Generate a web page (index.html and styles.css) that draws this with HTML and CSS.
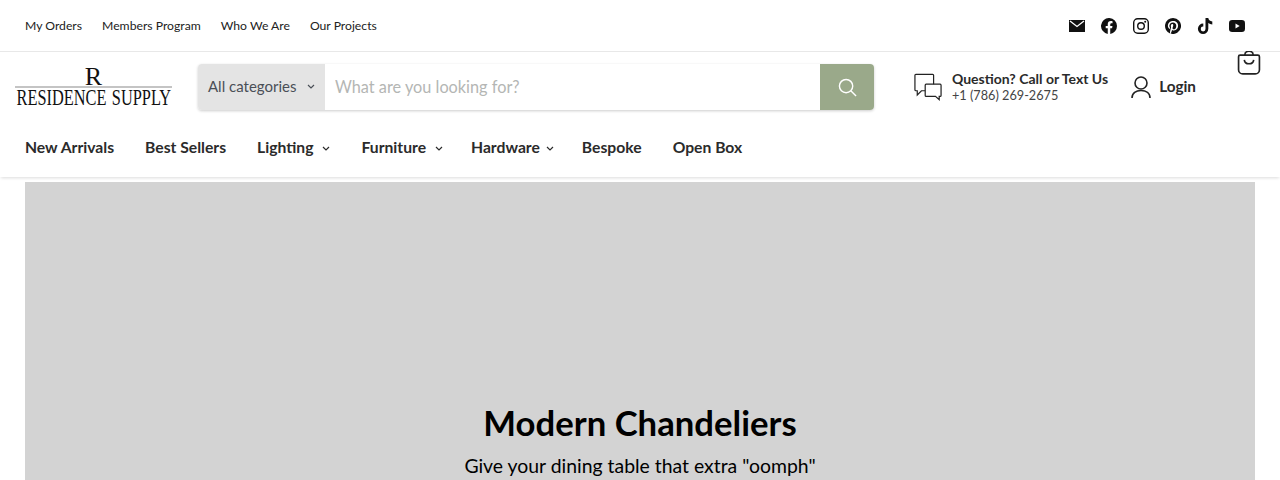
FILE: index.html
```html
<!DOCTYPE html>
<html lang="en">
<head>
    <meta charset="UTF-8">
    <meta name="viewport" content="width=device-width, initial-scale=1.0">
    <title>Residence Supply</title>
    <link rel="stylesheet" href="styles.css">
</head>
<body>
    <!-- Top bar -->
    <div class="topbar">
        <div class="toplinks">
            <a href="#">My Orders</a>
            <a href="#">Members Program</a>
            <a href="#">Who We Are</a>
            <a href="#">Our Projects</a>
        </div>
        <div class="social">
            <svg viewBox="0 0 16 16"><path d="M0 2h16v12H0z"/><path d="M1 3l7 5.500L15 3" fill="none" stroke="#fff" stroke-width="1.300"/></svg>
            <svg viewBox="0 0 16 16"><path d="M16 8a8 8 0 1 0-9.250 7.900V10.300H4.700V8h2.050V6.200c0-2 1.200-3.100 3-3.100.9 0 1.800.15 1.800.15v2h-1c-1 0-1.300.6-1.300 1.250V8h2.200l-.35 2.300H9.250v5.600A8 8 0 0 0 16 8z"/></svg>
            <svg viewBox="0 0 16 16"><rect x=".7" y=".7" width="14.600" height="14.600" rx="4" fill="none" stroke="#111" stroke-width="1.400"/><circle cx="8" cy="8" r="3.300" fill="none" stroke="#111" stroke-width="1.400"/><circle cx="12.200" cy="3.800" r="1"/></svg>
            <svg viewBox="0 0 16 16"><path fill-rule="evenodd" d="M8 0a8 8 0 0 0-2.900 15.450c-.07-.63-.13-1.600.03-2.300l.94-3.970s-.24-.48-.24-1.180c0-1.100.64-1.930 1.440-1.930.68 0 1 .51 1 1.120 0 .68-.43 1.700-.66 2.650-.19.790.4 1.440 1.180 1.440 1.420 0 2.500-1.500 2.500-3.650 0-1.900-1.370-3.240-3.330-3.240-2.270 0-3.600 1.700-3.600 3.460 0 .68.26 1.420.59 1.820.06.080.07.150.05.230l-.22.900c-.04.140-.12.170-.27.100-1-.46-1.620-1.920-1.620-3.090 0-2.520 1.830-4.830 5.270-4.830 2.770 0 4.920 1.970 4.920 4.610 0 2.750-1.730 4.960-4.140 4.960-.81 0-1.570-.42-1.830-.92l-.5 1.900c-.18.690-.67 1.560-1 2.090A8 8 0 1 0 8 0z"/></svg>
            <svg viewBox="0 0 16 16"><path d="M8.500 0h2.800c.2 2 1.500 3.200 4 3.400v3a6.500 6.500 0 0 1-4-1.300v5.700a5.200 5.200 0 1 1-5-5.200v3a2.400 2.400 0 1 0 2.200 2.300z"/></svg>
            <svg viewBox="0 0 16 16"><rect y="2" width="16" height="12" rx="3.200"/><path d="M6.500 5.500L10.700 8l-4.200 2.500z" fill="#fff"/></svg>
        </div>
    </div>

    <!-- Logo, search, contact -->
    <div class="header">
        <div class="logo">
            <span class="logo-r">R</span>
            <span class="logo-name">RESIDENCE SUPPLY</span>
        </div>
        <form class="search">
            <div class="category">All categories <svg class="chev" viewBox="0 0 8 5"><path d="M1 1l3 3 3-3"/></svg></div>
            <input class="search-input" type="text" placeholder="What are you looking for?">
            <button class="search-btn" type="button">
                <svg viewBox="0 0 20 20"><circle cx="8.500" cy="8.500" r="7"/><path d="M13.500 13.500L19 19"/></svg>
            </button>
        </form>
        <div class="contact">
            <svg class="contact-icon" viewBox="0 0 30 30"><path d="M21 12V2.500a1 1 0 0 0-1-1H2a1 1 0 0 0-1 1V18a1 1 0 0 0 1 1h1.500v4.500L8 19h4"/><path d="M13 12h15a1 1 0 0 1 1 1v11a1 1 0 0 1-1 1h-1v3.500L23 25H13a1 1 0 0 1-1-1V13a1 1 0 0 1 1-1z"/></svg>
            <div class="contact-text">
                <strong>Question? Call or Text Us</strong>
                <span>+1 (786) 269-2675</span>
            </div>
        </div>
        <a class="login" href="#">
            <svg viewBox="0 0 20 23"><circle cx="10" cy="7" r="6"/><path d="M1 22c0-5 4-7.500 9-7.500s9 2.500 9 7.500"/></svg>
            Login
        </a>
    </div>

    <!-- Cart sits over the header -->
    <svg class="cart" viewBox="1.200 1 21.600 23"><path d="M3.500 5h17a1.500 1.500 0 0 1 1.500 1.500V19a4 4 0 0 1-4 4H6a4 4 0 0 1-4-4V6.500A1.500 1.500 0 0 1 3.500 5z"/><path d="M8 5c0-5 8-5 8 0"/><path d="M7.500 9.500c.5 5 8.500 5 9 0"/></svg>

    <!-- Main nav -->
    <nav class="nav">
        <a href="#">New Arrivals</a>
        <a href="#">Best Sellers</a>
        <a href="#" class="wide">Lighting<svg class="chev" viewBox="0 0 8 5"><path d="M1 1l3 3 3-3"/></svg></a>
        <a href="#" class="wide menu">Furniture<svg class="chev" viewBox="0 0 8 5"><path d="M1 1l3 3 3-3"/></svg></a>
        <a href="#" class="menu">Hardware<svg class="chev" viewBox="0 0 8 5"><path d="M1 1l3 3 3-3"/></svg></a>
        <a href="#">Bespoke</a>
        <a href="#">Open Box</a>
    </nav>

    <!-- Hero -->
    <section class="hero">
        <h1>Modern Chandeliers</h1>
        <p>Give your dining table that extra "oomph"</p>
    </section>
</body>
</html>
```

FILE: styles.css
```css
html, body {
    height: 480px;
    overflow: hidden;
}

body {
    margin: 0;
    position: relative;
    font-family: Lato, "Open Sans", sans-serif;
    color: #2b2b2b;
    background: #fff;
}

a {
    color: inherit;
    text-decoration: none;
}

.topbar {
    height: 51px;
    border-bottom: 1px solid #e8e8e8;
    padding: 0 35px 0 25px;
    display: flex;
    align-items: center;
    justify-content: space-between;
}

.toplinks {
    display: flex;
    gap: 20px;
    font-size: 12.200px;
    color: #222;
    padding-bottom: 1px;
}

.social {
    display: flex;
    gap: 16px;
    margin-top: 1px;
}

.social svg {
    width: 16px;
    height: 16px;
    fill: #111;
}

.header {
    display: flex;
    align-items: center;
    height: 70px;
    padding-left: 15px;
}

.logo {
    width: 157px;
    margin-right: 26px;
    display: flex;
    flex-direction: column;
    align-items: center;
    font-family: "Liberation Serif", serif;
    color: #111;
}

.logo-r {
    font-size: 26px;
    line-height: 19px;
    height: 19px;
    width: 100%;
    text-align: center;
    border-bottom: 2px solid #c4c4c4;
}

.logo-name {
    font-size: 23px;
    line-height: 19px;
    white-space: nowrap;
    word-spacing: 2px;
    transform: scaleX(.71);
}

.search {
    width: 676px;
    height: 46px;
    display: flex;
    border-radius: 4px;
    overflow: hidden;
    box-shadow: 0 1px 3px rgba(0, 0, 0, .2);
}

.category {
    width: 127px;
    box-sizing: border-box;
    background: #e4e4e4;
    display: flex;
    align-items: center;
    justify-content: space-between;
    padding: 0 10px 2px;
    font-size: 15px;
    color: #4a4f57;
}

.search-input {
    flex: 1;
    min-width: 0;
    border: 0;
    outline: 0;
    padding: 0 10px 2px;
    font-family: inherit;
    font-size: 16.300px;
}

.search-input::placeholder {
    color: #b4b6b4;
    opacity: 1;
}

.search-btn {
    width: 54px;
    border: 0;
    padding: 0;
    background: #9aa98a;
    display: flex;
    align-items: center;
    justify-content: center;
}

.search-btn svg {
    width: 19px;
    height: 19px;
    fill: none;
    stroke: #fff;
    stroke-width: 1.500;
}

.chev {
    width: 8px;
    height: 5px;
    fill: none;
    stroke: currentColor;
    stroke-width: 1.200;
}

.contact {
    display: flex;
    align-items: center;
    gap: 10px;
    margin-left: 40px;
}

.contact-icon {
    width: 28px;
    height: 28px;
    fill: none;
    stroke: #222;
    stroke-width: 1.300;
}

.contact-text {
    display: flex;
    flex-direction: column;
    font-size: 12.700px;
    line-height: 17px;
}

.contact-text strong {
    font-size: 14px;
    white-space: nowrap;
}

.contact-text span {
    color: #444;
}

.login {
    display: flex;
    align-items: center;
    gap: 8px;
    margin-left: 23px;
    padding-bottom: 2px;
    font-size: 15.300px;
    font-weight: 700;
}

.login svg {
    width: 20px;
    height: 23px;
    margin-top: 2px;
    fill: none;
    stroke: #222;
    stroke-width: 1.600;
}

.cart {
    position: absolute;
    left: 1237px;
    top: 51px;
    width: 24px;
    height: 24px;
    fill: none;
    stroke: #222;
    stroke-width: 1.600;
}

.nav {
    height: 49px;
    padding: 0 25px 6px;
    display: flex;
    align-items: center;
    gap: 31px;
    font-size: 15.700px;
    font-weight: 700;
    box-shadow: 0 2px 3px -1px rgba(0, 0, 0, .14);
}

.nav a {
    display: flex;
    align-items: center;
    gap: 6px;
}

.nav a.wide {
    gap: 9px;
}

.nav a.menu {
    margin-right: -3px;
}

.nav .chev {
    margin-top: 3px;
}

.hero {
    margin: 5px 25px 0;
    height: 298px;
    background: #d3d3d3;
    text-align: center;
    color: #000;
    box-sizing: border-box;
    padding-top: 221px;
}

.hero h1 {
    margin: 0;
    font-size: 34.700px;
    line-height: 40px;
    font-weight: 700;
}

.hero p {
    margin: 11px 0 0;
    font-size: 19.400px;
    line-height: 24px;
}
```
